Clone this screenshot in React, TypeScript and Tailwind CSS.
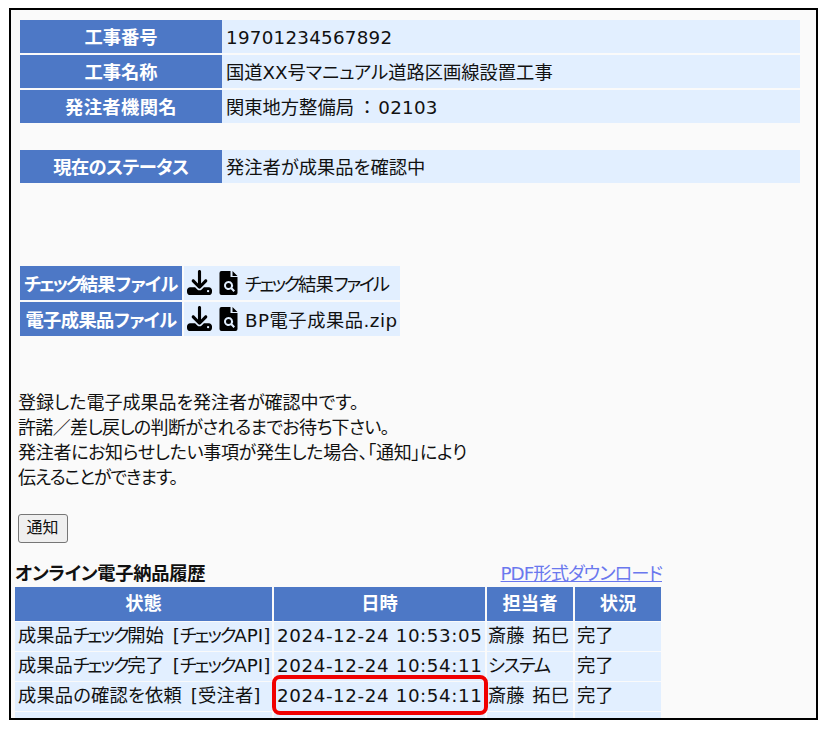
import React from 'react';
import { FaDownload } from 'react-icons/fa6';

const infoRows: [string, React.ReactNode, string][] = [
  ['工事番号', <span className="tracking-[0.25px]">19701234567892</span>, ''],
  ['工事名称', '国道XX号マニュアル道路区画線設置工事', ''],
  [
    '発注者機関名',
    <>関東地方整備局<span className="[font-feature-settings:normal] pl-[4px] pr-[2px]">：</span><span className="tracking-[0.25px]">02103</span></>,
    'tracking-[0.4px]',
  ],
];

const check = <span className="tracking-[-2.4px]">チェック</span>;
const checkRow = <span className="tracking-[-2px]">チェック</span>;

const historyRows: [React.ReactNode, string, React.ReactNode, string][] = [
  [<>成果品{checkRow}開始 [{checkRow}API]</>, '2024-12-24 10:53:05', '斎藤 拓巳', '完了'],
  [<>成果品{checkRow}完了 [{checkRow}API]</>, '2024-12-24 10:54:11', <span className="tracking-[-1.2px]">システム</span>, '完了'],
  [<span className="tracking-[0.15px]">成果品の確認を依頼 [受注者]</span>, '2024-12-24 10:54:11', '斎藤 拓巳', '完了'],
  ['', '', '', ''],
];

function FileSearchIcon() {
  return (
    <svg viewBox="0 0 18 24" className="w-[19px] h-[24px] shrink-0">
      <path
        fillRule="evenodd"
        fill="#000"
        d="M2 0H11V6H18V22a2 2 0 0 1-2 2H2a2 2 0 0 1-2-2V2a2 2 0 0 1 2-2ZM13 0l5 5h-5ZM9 10a4.5 4.5 0 1 0 2.4 8.3l2.6 2.6 1.5-1.5-2.6-2.6A4.5 4.5 0 0 0 9 10Zm0 2a2.5 2.5 0 1 1 0 5 2.5 2.5 0 0 1 0-5Z"
      />
    </svg>
  );
}

function FileCell({ label, name }: { label: React.ReactNode; name: React.ReactNode }) {
  return (
    <div className="flex gap-[2px] h-[34px]">
      <div className="w-[162px] bg-[#4d78c6] text-white font-bold flex items-center justify-center whitespace-nowrap tracking-[-0.6px] pt-[4px]">
        {label}
      </div>
      <div className="w-[216px] bg-[#e2efff] flex items-center pl-[3px] whitespace-nowrap">
        <FaDownload className="w-[25px] h-[25px] shrink-0 text-black" />
        <span className="ml-[7px]"><FileSearchIcon /></span>
        <span className="ml-[7px] pt-[4px]">{name}</span>
      </div>
    </div>
  );
}

export default function App() {
  return (
    <div className="bg-white h-[729px] pt-[8px] pl-[9px] overflow-hidden text-[18.3px] text-[#111] [font-family:'DejaVu_Sans','Noto_Sans_CJK_JP',sans-serif] [font-feature-settings:'palt']">
      <div className="relative w-[809px] h-[712px] border-[2.5px] border-black bg-[#fafafa] overflow-hidden">
        <div className="pl-[9px] pt-[9.5px] w-[789px] flex flex-col gap-[2px]">
          {infoRows.map(([label, value, labelClass]) => (
            <div key={label} className="flex h-[33px]">
              <div className={`w-[202px] bg-[#4d78c6] text-white font-bold flex items-center justify-center pt-[3px] ${labelClass}`}>{label}</div>
              <div className="flex-1 bg-[#e2efff] flex items-center pl-[4px] pt-[3px]">{value}</div>
            </div>
          ))}
        </div>
        <div className="pl-[9px] pt-[27px] w-[789px]">
          <div className="flex h-[33px]">
            <div className="w-[202px] bg-[#4d78c6] text-white font-bold flex items-center justify-center pt-[3px] tracking-[-0.6px]">現在のステータス</div>
            <div className="flex-1 bg-[#e2efff] flex items-center pl-[4px] pt-[3px]">発注者が成果品を確認中</div>
          </div>
        </div>
        <div className="pl-[9px] pt-[83px] flex flex-col gap-[2px]">
          <FileCell
            label={<>{check}結果ファイル</>}
            name={<><span className="tracking-[-2.4px]">チェック</span><span className="tracking-[-0.6px]">結果</span><span className="tracking-[-2.2px]">ファイル</span></>}
          />
          <FileCell label="電子成果品ファイル" name={<span className="tracking-[0.5px]">BP電子成果品.zip</span>} />
        </div>
        <div className="pl-[7px] pt-[54px] leading-[25px] text-[18px]">
          <p>登録した電子成果品を発注者が確認中です。</p>
          <p className="tracking-[-0.65px]">許諾／差し戻しの判断がされるまでお待ち下さい。</p>
          <p className="tracking-[-0.3px]">発注者にお知らせしたい事項が発生した場合、「通知」により</p>
          <p className="tracking-[-1.1px]">伝えることができます。</p>
        </div>
        <div className="pl-[6.5px] pt-[24px]">
          <button className="w-[50px] h-[29px] bg-[#efefef] border border-[#767676] rounded-[3px] text-[16px] flex items-center justify-center">通知</button>
        </div>
        <div className="pl-[4px] pt-[17px] w-[651px]">
          <div className="flex items-start justify-between h-[27px] leading-[27px]">
            <span className="font-bold tracking-[-0.3px] text-[#111]">オンライン電子納品履歴</span>
            <a className="text-[#6a78ee] underline tracking-[-0.95px]">PDF形式ダウンロード</a>
          </div>
          <div className="grid grid-cols-[257px_211px_86px_86px] gap-x-[2px] gap-y-[1px]">
            <div className="bg-[#4d78c6] text-white font-bold h-[34px] flex items-center justify-center">状態</div>
            <div className="bg-[#4d78c6] text-white font-bold h-[34px] flex items-center justify-center">日時</div>
            <div className="bg-[#4d78c6] text-white font-bold h-[34px] flex items-center justify-center">担当者</div>
            <div className="bg-[#4d78c6] text-white font-bold h-[34px] flex items-center justify-center">状況</div>
            {historyRows.map((row, i) => (
              <React.Fragment key={i}>
                <div className="bg-[#e2efff] h-[29px] flex items-center pl-[3px] whitespace-pre [word-spacing:3px]">{row[0]}</div>
                <div className="bg-[#e2efff] h-[29px] flex items-center pl-[3px] whitespace-nowrap tracking-[0.6px]">{row[1]}</div>
                <div className="bg-[#e2efff] h-[29px] flex items-center pl-[1px] whitespace-pre [word-spacing:2px]">{row[2]}</div>
                <div className="bg-[#e2efff] h-[29px] flex items-center pl-[2px] whitespace-nowrap">{row[3]}</div>
              </React.Fragment>
            ))}
          </div>
        </div>
        {/* red highlight drawn over the third row */}
        <div className="absolute left-[261px] top-[665px] w-[216px] h-[40px] border-[4px] border-[#f00000] rounded-[8px]" />
      </div>
    </div>
  );
}
